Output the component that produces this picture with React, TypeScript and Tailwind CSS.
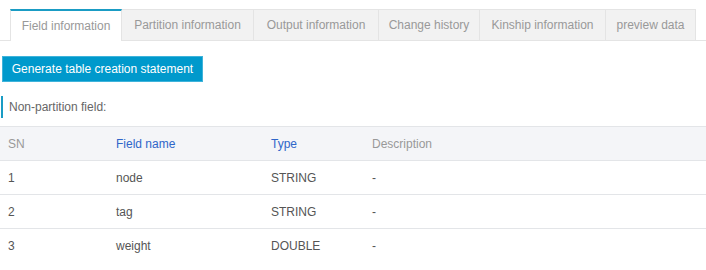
import React from 'react';

const tabs = [
  { label: 'Field information', w: 'w-[112px]' },
  { label: 'Partition information', w: 'w-[132px]' },
  { label: 'Output information', w: 'w-[125px]' },
  { label: 'Change history', w: 'w-[101px]' },
  { label: 'Kinship information', w: 'w-[126px]' },
  { label: 'preview data', w: 'w-[90px]' },
];

const rows = [
  { sn: 1, name: 'node', type: 'STRING', desc: '-' },
  { sn: 2, name: 'tag', type: 'STRING', desc: '-' },
  { sn: 3, name: 'weight', type: 'DOUBLE', desc: '-' },
];

export default function App() {
  return (
    <div className="w-[706px] h-[270px] bg-white overflow-hidden text-[12px] font-['Liberation_Sans',Arial,sans-serif]">
      {/* tabs */}
      <div className="flex pt-[9px] pl-[2px] border-b border-[#e4e4e4]">
        <div className="w-[8px]" />
        {tabs.map((t, i) =>
          i === 0 ? (
            <div
              key={t.label}
              className={`${t.w} h-[32px] -mb-px flex items-center justify-center bg-white border-t-2 border-t-[#1a9cc4] border-x border-x-[#e4e4e4] text-[#999]`}
            >
              {t.label}
            </div>
          ) : (
            <div
              key={t.label}
              className={`${t.w} h-[31px] flex items-center justify-center bg-[#f2f2f2] border-t border-r border-[#e4e4e4] text-[#999]`}
            >
              {t.label}
            </div>
          )
        )}
      </div>

      {/* action button */}
      <div className="pl-[2px] pt-[15px]">
        <button className="w-[201px] h-[26px] bg-[#0099cc] border border-[#3fb3da] text-white text-[12px]">
          Generate table creation statement
        </button>
      </div>

      {/* section title */}
      <div className="mt-[14px] ml-[1px] h-[22px] pl-[6px] border-l-2 border-[#1a9cc4] flex items-center text-[#666]">
        Non-partition field:
      </div>

      {/* table */}
      <table className="mt-[8px] w-full border-collapse">
        <thead>
          <tr className="h-[34px] bg-[#f4f5f8] border-y border-[#e3e5e8]">
            <th className="w-[114px] pl-[8px] text-left font-normal text-[#999]">SN</th>
            <th className="w-[155px] pl-[2px] text-left font-normal text-[#2f66c9]">Field name</th>
            <th className="w-[101px] pl-[2px] text-left font-normal text-[#2f66c9]">Type</th>
            <th className="pl-[2px] text-left font-normal text-[#999]">Description</th>
          </tr>
        </thead>
        <tbody>
          {rows.map((r, i) => (
            <tr
              key={r.sn}
              className={`h-[34px] text-[#555] ${i < rows.length - 1 ? 'border-b border-[#e3e5e8]' : ''}`}
            >
              <td className="pl-[8px]">{r.sn}</td>
              <td className="pl-[2px]">{r.name}</td>
              <td className="pl-[2px]">{r.type}</td>
              <td className="pl-[2px]">{r.desc}</td>
            </tr>
          ))}
        </tbody>
      </table>
    </div>
  );
}
